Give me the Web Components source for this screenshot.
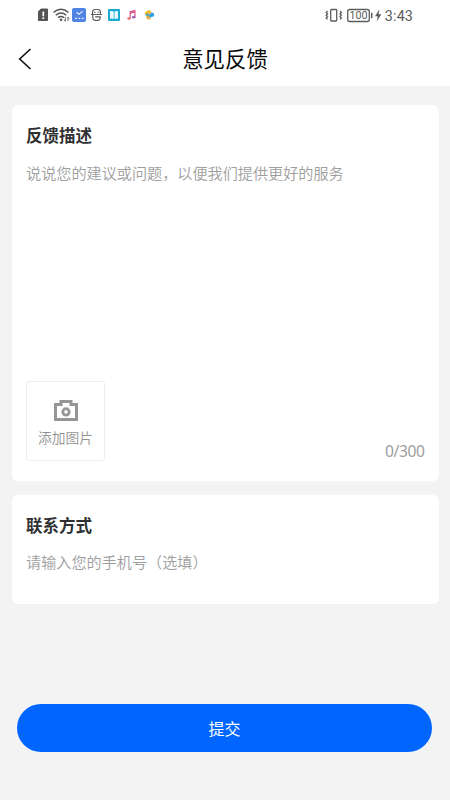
<!DOCTYPE html>
<html lang="zh-CN"><head><meta charset="utf-8"><title>意见反馈</title>
<style>
html,body{margin:0;height:100%;background:#f3f3f3}
body{font-family:"Noto Sans CJK SC","Noto Sans",sans-serif}
</style></head><body>
<feedback-page></feedback-page>
<script>
function define(name, html){
  customElements.define(name, class extends HTMLElement{
    constructor(){
      super();
      const t=document.createElement('template');
      t.innerHTML=html;
      this.attachShadow({mode:'open'}).append(t.content.cloneNode(true));
    }
  });
}
define('status-bar', `
<style>
:host{display:flex;justify-content:space-between;align-items:center;height:30px;padding:0 38px;box-sizing:border-box;background:#fff;color:#5b5b5b}
div{display:flex;align-items:center;height:30px}
svg{display:block}
.time{font:14.300px/30px Roboto,sans-serif;letter-spacing:.15px;margin-left:3px;margin-right:-1px;padding-top:1px}
.right{margin-right:0}
.right svg{margin-left:-1px}
</style>
<div>
<svg width="120" height="30" viewBox="38 0 120 30" fill="none">
  <path d="M41 9h6.500v11.500H38.500v-9z" fill="#555" stroke="#555" stroke-linejoin="round"/>
  <path d="M43.300 11.500v4.700M43.300 17.300v1.800" stroke="#fff" stroke-width="1.700"/>
  <g stroke="#555" stroke-width="1.500"><path d="M53.500 12.500q7.500-6.500 15 0"/><path d="M55.800 15.200q5.200-4.400 10.400 0"/><path d="M58 17.700q3-2.500 6 0"/></g>
  <circle cx="61" cy="19.700" r="1.300" fill="#555"/>
  <path d="M65.300 17.200v4l-1.300-1.500M68 21v-4l1.300 1.500" stroke="#666" stroke-width="1"/>
  <rect x="72" y="8" width="14" height="14" rx="2" fill="#5084e4"/>
  <path d="M76.500 12.300l2.500 2 3.700-3.200M75 18.300h2m1.400 0h1.800m1.400 0h2" stroke="#e3edff" stroke-width="1.200"/>
  <path d="M92.600 14v-2q0-2.500 2.500-2.500h2.800q2.500 0 2.500 2.500v2M91 14.500h11M92.800 15v3q0 2.500 3.700 2.500t3.700-2.500v-1.200h-5" stroke="#5e5e5e" stroke-width="1.200"/>
  <path d="M94.200 12.300h1.200M97.600 12.300h1.200" stroke="#666" stroke-width="1.200"/>
  <rect x="108" y="9" width="12" height="12" rx="1" fill="#16acd2"/>
  <path d="M110 11.300q2.200-.7 3.700.3v7.300q-1.500-.8-3.700-.2zM114.500 11.600q1.500-1 3.500-.3v7.400q-2-.6-3.500.2z" fill="#eefaff"/>
  <path d="M130.200 18.500v-6.700l4.700-1.300v6.500M130.200 13.200l4.700-1.300" stroke="#d9548a" stroke-width="1.200"/>
  <ellipse cx="129" cy="18.500" rx="1.700" ry="1.300" fill="#f06a66"/><ellipse cx="133.700" cy="17.300" rx="1.700" ry="1.300" fill="#9b5bb2"/>
  <path d="M145 14.500q-1-2.500 1-2.500 1-2 3-1.700 2 0 2.500 2.200l-3.200 3.800z" fill="#f6b72c"/>
  <path d="M151.500 12.500q2.800.3 2.700 2.700-.5 2-3 1.800l-1.700 1.800-2-1.300z" fill="#2b9ee8"/>
  <path d="M146 15.300l2.600-.8 1.900 4.800q-2.700.8-3.800-.8z" fill="#efa93a"/><path d="M145 14.700l3-1.400 1.800 1.500-2.300 1.800z" fill="#4ba6bd"/>
</svg></div>
<div class="right">
<svg width="57" height="30" viewBox="325 0 57 30" fill="none" stroke="#5b5b5b">
 <rect x="330.700" y="9.500" width="6" height="11.500" rx=".7" stroke-width="1.300"/>
 <path d="M327.500 11l-1.300 1.400 1.300 1.400-1.300 1.400 1.300 1.400-1.300 1.400 1.300 1.400M340 11l1.300 1.400-1.300 1.400 1.300 1.400-1.300 1.400 1.300 1.400-1.300 1.400" stroke-width="1.300"/>
 <rect x="347.700" y="9.500" width="21.600" height="12" rx="2" stroke-width="1.300"/>
 <path d="M371.700 12.700v5.500" stroke-width="1.500"/>
 <text x="358.500" y="19.400" text-anchor="middle" textLength="18" lengthAdjust="spacingAndGlyphs" font-family="Roboto,sans-serif" font-size="11" fill="#5b5b5b" stroke="none">100</text>
 <path d="M379.500 9.300l-4.500 7h2.700l-1 5.200 4.600-7.300h-2.800z" fill="#5b5b5b" stroke="none"/>
</svg><span class="time">3:43</span></div>`);
define('nav-bar', `
<style>
:host{display:grid;grid-template-columns:50px 1fr 50px;align-items:center;height:56px;background:#fff;color:#080808}
h1{margin:0;font-weight:400;font-size:21.400px;line-height:32px;text-align:center}
svg{display:block;margin:2px 0 0 18px}
</style>
<svg width="14" height="22" viewBox="0 0 14 22" fill="none" stroke="#111" stroke-width="1.600"><path d="M12.500 1L1.700 11l10.800 10"/></svg>
<h1><slot></slot></h1>`);
define('form-card', `
<style>
:host{display:flex;flex-direction:column;box-sizing:border-box;background:#fff;border-radius:6px;padding:18px 14px 20px;color:#9e9e9e;font-size:15.130px;font-weight:350;line-height:24px}
h2{margin:0 0 var(--title-gap,12px);font-size:16.500px;line-height:25px;font-weight:700;color:#303133}
.f{margin-top:auto}
</style>
<h2><slot name="title"></slot></h2><div><slot></slot></div><div class="f"><slot name="footer"></slot></div>`);
define('upload-box', `
<style>
:host{display:flex;flex-direction:column;align-items:center;width:79px;height:80px;box-sizing:border-box;border:1px solid #ececec;border-radius:3px;padding-top:18px;color:#929292;font-size:13.800px;line-height:20px}
svg{display:block;margin-bottom:6px}
</style>
<svg width="24" height="21" viewBox="0 0 24 21" fill="none" stroke="#959595"><path d="M1.500 4.500H7v-3h10v3h5.500v15h-21z" stroke-width="3"/><circle cx="12" cy="11.900" r="3.200" stroke-width="2.800"/></svg>
<span><slot></slot></span>`);
define('submit-button', `
<style>
:host{display:block}
button{display:block;width:100%;height:48px;border:0;border-radius:24px;background:#0066ff;color:#fff;font:inherit;font-size:16px;line-height:24px;padding:0 0 1px}
</style><button><slot></slot></button>`);
define('feedback-page', `
<style>
:host{display:flex;flex-direction:column;height:800px;background:#f3f3f3}
main{display:flex;flex-direction:column;gap:14px;padding:19px 11.500px 0 12px}
.desc{height:376px}.contact{height:109px;--title-gap:11px}
.foot{display:flex;justify-content:space-between;align-items:flex-end}
.foot span{font:15.600px/18px "Noto Sans",sans-serif;letter-spacing:-.4px;padding-bottom:1px}
submit-button{margin:100px 18px 0 17px}
</style>
<status-bar></status-bar><nav-bar>意见反馈</nav-bar>
<main>
<form-card class="desc"><span slot="title">反馈描述</span>说说您的建议或问题，以便我们提供更好的服务
<div slot="footer" class="foot"><upload-box>添加图片</upload-box><span>0/300</span></div></form-card>
<form-card class="contact"><span slot="title">联系方式</span>请输入您的手机号（选填）</form-card>
</main>
<submit-button>提交</submit-button>`);
</script></body></html>
